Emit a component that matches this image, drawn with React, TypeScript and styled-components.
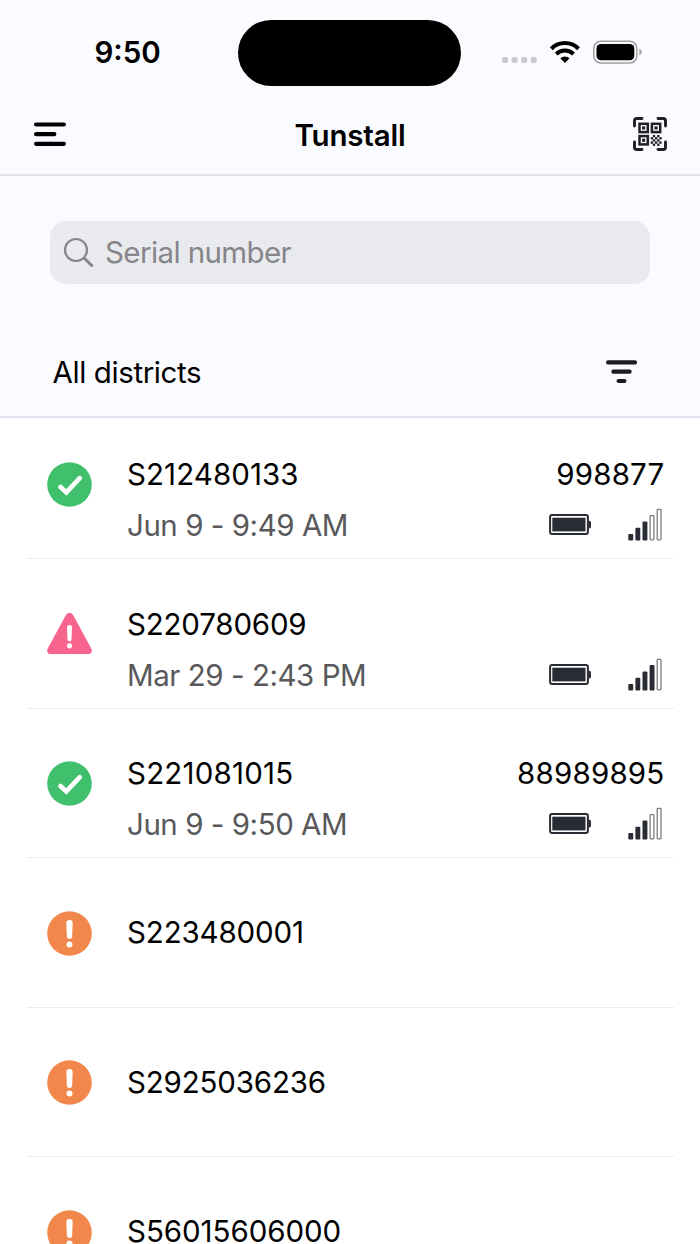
import React from "react";
import styled, { createGlobalStyle } from "styled-components";

const GlobalStyle = createGlobalStyle`
  * { box-sizing: border-box; }
  body { margin: 0; background: #ffffff; overflow: hidden; }
`;

const Screen = styled.div`
  width: 700px;
  height: 1244px;
  overflow: hidden;
  background: #ffffff;
  color: #000000;
  font-family: Inter, sans-serif;
  font-size: 29.5px;
  line-height: 36px;
`;

const Header = styled.header`
  height: 418px;
  background: #fafbff;
  border-bottom: 2px solid #e1e3ef;
`;

const StatusBar = styled.div`
  height: 105px;
  padding: 20px 58px 0 94.5px;
  display: flex;
  justify-content: space-between;
`;

const Clock = styled.div`
  width: 144px;
  padding-top: 14.4px;
  font-weight: 600;
  font-size: 29.5px;
`;

const Island = styled.div`
  width: 223px;
  height: 65.5px;
  border-radius: 33px;
  background: #000000;
`;

const StatusIcons = styled.div`
  width: 181px;
  padding-top: 20px;
  display: flex;
  justify-content: flex-end;
`;

const NavBar = styled.div`
  height: 71px;
  padding: 0 33px 11px;
  border-bottom: 2px solid #e1e3ef;
  display: flex;
  align-items: center;
  justify-content: space-between;
`;

const Title = styled.h1`
  margin: 0;
  padding-top: 1px;
  font-size: 29.5px;
  font-weight: 600;
  letter-spacing: -0.2px;
`;

const SearchField = styled.div`
  height: 63.5px;
  margin: 44.5px 50px 0;
  padding: 0 13px;
  border-radius: 16px;
  background: #e9eaee;
  color: #85858a;
  display: flex;
  align-items: center;
  gap: 11px;
`;

const Placeholder = styled.span`
  padding-bottom: 1.5px;
  letter-spacing: -0.6px;
`;

const FilterRow = styled.div`
  height: 132px;
  padding: 44.4px 62px 0 52.5px;
  display: flex;
  align-items: center;
  justify-content: space-between;
`;

const Text = styled.span<{ $spacing?: number }>`
  letter-spacing: ${(p) => p.$spacing ?? 0}px;
  white-space: nowrap;
`;

const List = styled.main`
  margin: 0 26.5px;
`;

const Row = styled.article`
  height: 149.6px;
  padding: 52.4px 9px 0 20.5px;
  border-bottom: 1px solid #ececf0;
  display: flex;
  align-items: flex-start;

  &:first-child {
    height: 141px;
    padding-top: 43.8px;
  }
`;

const Details = styled.div<{ $single: boolean }>`
  flex: 1;
  margin-left: 35px;
  margin-top: ${(p) => (p.$single ? 3.7 : -5.9)}px;
`;

const Line = styled.div<{ $muted?: boolean }>`
  height: 51.2px;
  color: ${(p) => (p.$muted ? "#59595b" : "#000000")};
  display: flex;
  justify-content: space-between;
`;

const Meters = styled.div`
  display: flex;
  gap: 36px;
  padding: 1px 3px 0 0;
`;

function MenuIcon() {
  return (
    <svg width="34" height="28" viewBox="33 120 34 28" stroke="#000" strokeWidth="4.2" strokeLinecap="round">
      <path d="M36.1 124.5H63.9M36.1 134.2H54.3M36.1 143.8H63.9" />
    </svg>
  );
}

function QrIcon() {
  const cells = [[1, 0], [3, 0], [0, 1], [2, 1], [4, 1], [1, 2], [3, 2], [0, 3], [2, 3], [4, 3], [1, 4], [3, 4]];
  const finders = [[6.5, 6.8], [18.9, 6.8], [6.5, 19.1]];
  return (
    <svg width="34" height="34" viewBox="0 0 34 34" fill="none" stroke="#1f1f24">
      <path
        d="M1.5 9V3.8Q1.5 1.5 3.8 1.5H9M25 1.5H30.2Q32.5 1.5 32.5 3.8V9M32.5 25V30.2Q32.5 32.5 30.2 32.5H25M9 32.5H3.8Q1.5 32.5 1.5 30.2V25"
        strokeWidth="2.9"
        strokeLinecap="round"
      />
      {finders.map(([x, y]) => (
        <g key={`${x}-${y}`}>
          <rect x={x} y={y} width="8.3" height="8.3" strokeWidth="2.5" />
          <rect x={x + 2.6} y={y + 2.6} width="3.1" height="3.1" fill="#1f1f24" stroke="none" />
        </g>
      ))}
      {cells.map(([x, y]) => (
        <rect key={`${x}-${y}`} x={17.7 + x * 2.15} y={18 + y * 2.15} width="2.3" height="2.3" fill="#1f1f24" stroke="none" />
      ))}
    </svg>
  );
}

function PhoneStatus() {
  return (
    <svg width="142" height="26" viewBox="500 40 142 26">
      {[502, 511.6, 521.2, 530.8].map((x) => (
        <rect key={x} x={x} y="57" width="6" height="6" rx="1.8" fill="#c9cacf" />
      ))}
      <g fill="none" stroke="#000" strokeWidth="4.1">
        <path d="M551.3 48.7A19.2 19.2 0 0 1 578.5 48.7" />
        <path d="M556.3 54.1A12.2 12.2 0 0 1 573.5 54.1" />
      </g>
      <path d="M564.9 63L560.3 58.3A6.6 6.6 0 0 1 569.5 58.3Z" fill="#000" />
      <rect x="593.8" y="41.3" width="43" height="21.6" rx="7" fill="none" stroke="#a0a0a3" strokeWidth="1.5" />
      <rect x="596.5" y="44" width="37.8" height="16.3" rx="4.6" fill="#000" />
      <path d="M639.3 48.6Q641.7 49.6 641.7 52T639.3 55.6Z" fill="#a0a0a3" />
    </svg>
  );
}

function SearchIcon() {
  return (
    <svg width="31" height="32" viewBox="63 235.8 31 32" fill="none" stroke="#85858a" strokeLinecap="round">
      <circle cx="76" cy="249.8" r="11" strokeWidth="2.2" />
      <path d="M84.6 258.3L91.7 265.3" strokeWidth="3" />
    </svg>
  );
}

function FilterIcon() {
  return (
    <svg width="32" height="26" viewBox="606 359 32 26" stroke="#1b1b1f" strokeWidth="4.2" strokeLinecap="round">
      <path d="M608.1 362.4H635M613.4 371.7H629.6M618.6 381H624.4" />
    </svg>
  );
}

type Status = "ok" | "alert" | "warning";

function StatusIcon({ status }: { status: Status }) {
  if (status === "alert") {
    return (
      <svg width="45" height="45" viewBox="0 0 45 45">
        <path d="M18.9 3.9Q22.5 -.3 26.1 3.9L44.3 37.4Q46.3 42.9 40.8 43.1H4.2Q-1.3 42.9 .7 37.4Z" fill="#f7658f" />
        <path d="M20 16.3Q20 14.1 22.5 14.1T25 16.3L24.5 28.7Q24.4 30.2 22.5 30.2T20.5 28.7Z" fill="#fff" />
        <circle cx="22.5" cy="34.8" r="2.6" fill="#fff" />
      </svg>
    );
  }
  return (
    <svg width="45" height="45" viewBox="0 0 45 45">
      <circle cx="22.5" cy="22.5" r="22.3" fill={status === "ok" ? "#40bf6c" : "#f1874b"} />
      {status === "ok" ? (
        <path d="M13.5 25L19.3 30.4L32.8 16.2" fill="none" stroke="#fff" strokeWidth="4.6" strokeLinecap="round" />
      ) : (
        <>
          <path d="M19.3 12Q19.3 9 22.5 9T25.7 12L25.1 26Q25 28 22.5 28T19.9 26Z" fill="#fff" />
          <circle cx="22.5" cy="33.6" r="3" fill="#fff" />
        </>
      )}
    </svg>
  );
}

function BatteryIcon() {
  return (
    <svg width="43" height="34" viewBox="549 508 43 34">
      <rect x="550.1" y="515.1" width="37.8" height="18.8" rx="2" fill="none" stroke="#2a2c35" strokeWidth="2" />
      <path d="M588.7 520.8H589.3Q591 521 591 522.5V526.7Q591 528.2 589.3 528.4H588.7Z" fill="#2a2c35" />
      <rect x="552.3" y="517.7" width="33.2" height="13.7" fill="#2a2c35" />
    </svg>
  );
}

function SignalIcon({ level }: { level: number }) {
  return (
    <svg width="34" height="34" viewBox="627.7 508 34 34">
      {[534, 527.7, 521.4, 515.1, 508.9].map((top, i) => {
        const x = 628 + i * 7.1;
        return i < level ? (
          <rect key={top} x={x} y={top} width="4.9" height={540.4 - top} rx="1" fill="#2a2c35" />
        ) : (
          <rect key={top} x={x + 0.5} y={top + 0.5} width="3.8" height={539.4 - top} rx="0.8" fill="none" stroke="#7c7d82" strokeWidth="1.3" />
        );
      })}
    </svg>
  );
}

interface Device {
  serial: string;
  tracking: number;
  status: Status;
  seen?: string;
  code?: string;
  signal?: number;
}

const devices: Device[] = [
  { serial: "S212480133", tracking: 0.08, status: "ok", seen: "Jun 9 - 9:49 AM", code: "998877", signal: 3 },
  { serial: "S220780609", tracking: -0.18, status: "alert", seen: "Mar 29 - 2:43 PM", signal: 4 },
  { serial: "S221081015", tracking: 0.2, status: "ok", seen: "Jun 9 - 9:50 AM", code: "88989895", signal: 3 },
  { serial: "S223480001", tracking: -0.14, status: "warning" },
  { serial: "S2925036236", tracking: -0.16, status: "warning" },
  { serial: "S56015606000", tracking: -0.05, status: "warning" },
];

function DeviceRow({ serial, tracking, status, seen, code, signal = 0 }: Device) {
  return (
    <Row>
      <StatusIcon status={status} />
      <Details $single={!seen}>
        <Line>
          <Text $spacing={tracking}>{serial}</Text>
          {code && <Text $spacing={0.2}>{code}</Text>}
        </Line>
        {seen && (
          <Line $muted>
            <Text $spacing={-0.46}>{seen}</Text>
            <Meters>
              <BatteryIcon />
              <SignalIcon level={signal} />
            </Meters>
          </Line>
        )}
      </Details>
    </Row>
  );
}

export default function App() {
  return (
    <Screen>
      <GlobalStyle />
      <Header>
        <StatusBar>
          <Clock>9:50</Clock>
          <Island />
          <StatusIcons>
            <PhoneStatus />
          </StatusIcons>
        </StatusBar>
        <NavBar>
          <MenuIcon />
          <Title>Tunstall</Title>
          <QrIcon />
        </NavBar>
        <SearchField>
          <SearchIcon />
          <Placeholder>Serial number</Placeholder>
        </SearchField>
        <FilterRow>
          <Text $spacing={-0.4}>All districts</Text>
          <FilterIcon />
        </FilterRow>
      </Header>
      <List>
        {devices.map((device) => (
          <DeviceRow key={device.serial} {...device} />
        ))}
      </List>
    </Screen>
  );
}
